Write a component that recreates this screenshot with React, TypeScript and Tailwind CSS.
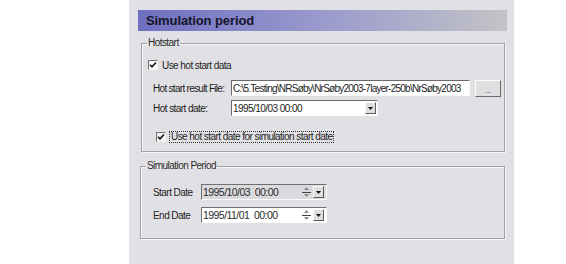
const FONT = "font-['Liberation_Sans',Arial,sans-serif]";

function Check({ focus }: { focus?: boolean }) {
  return (
    <span
      className={`flex h-[10px] w-[10px] shrink-0 items-center justify-center border border-t-[#6f6f6f] border-l-[#6f6f6f] border-b-[#f4f4f4] border-r-[#f4f4f4] ${
        focus ? 'bg-[#f2f2f2]' : 'bg-white'
      }`}
    >
      <svg width="8" height="8" viewBox="0 0 8 8">
        <path d="M1 3.8 L3 5.8 L7 1.5" fill="none" stroke="#111" strokeWidth="1.6" />
      </svg>
    </span>
  );
}

function DropButton({ h = 'h-[12px]' }: { h?: string }) {
  return (
    <span
      className={`flex ${h} w-[11px] items-center justify-center border border-t-[#fafafa] border-l-[#fafafa] border-b-[#5a5a5a] border-r-[#5a5a5a] bg-[#dedede]`}
    >
      <svg width="5" height="3" viewBox="0 0 5 3">
        <path d="M0 0 H5 L2.5 3 Z" fill="#111" />
      </svg>
    </span>
  );
}

function Spin() {
  return (
    <span className="flex h-[12px] w-[9px] flex-col items-center justify-between">
      <svg width="7" height="5" viewBox="0 0 7 5">
        <path d="M3.5 1 L6 4 H1 Z" fill="#8a8a8a" />
      </svg>
      <span className="h-px w-[9px] bg-[#444]" />
      <svg width="7" height="5" viewBox="0 0 7 5">
        <path d="M1 1 H6 L3.5 4 Z" fill="#8a8a8a" />
      </svg>
    </span>
  );
}

function DateField({ value, disabled }: { value: string; disabled?: boolean }) {
  return (
    <div
      className={`flex h-[16px] w-[126px] items-center border border-t-[#707070] border-l-[#707070] border-b-[#fafafa] border-r-[#fafafa] pr-[2px] ${
        disabled ? 'bg-[#dadade]' : 'bg-white'
      }`}
    >
      <span className="flex-1 whitespace-pre pl-[1px] text-[10.5px] leading-none text-[#2a2a2a]">{value}</span>
      <div className="mr-[2px]">
        <Spin />
      </div>
      <DropButton />
    </div>
  );
}

const legendCls = 'ml-[5px] px-[1px] leading-[12px] text-[#2a2a2a]';

export default function App() {
  return (
    <div className={`h-[264px] w-[566px] bg-white ${FONT} text-[10px] tracking-[-0.55px]`}>
      <div className="ml-[129px] h-[264px] w-[385px] bg-[#e1e1e5] pt-[10px]">
        {/* header */}
        <div className="ml-[9px] flex h-[21px] w-[369px] items-center bg-gradient-to-r from-[#6e6ec0] via-[#9a9acd] to-[#c3c3c6] pl-[8px]">
          <span className="text-[13px] font-bold tracking-[-0.1px] text-[#15152a]">Simulation period</span>
        </div>

        {/* Hotstart */}
        <fieldset className="ml-[12px] mt-[6px] h-[115px] w-[364px] border border-[#a2a2a4] shadow-[inset_1px_1px_0_#f6f6f6,1px_1px_0_#f6f6f6]">
          <legend className={legendCls}>Hotstart</legend>
          <div className="mt-[9px] flex h-[14px] items-center pl-[6px]">
            <Check />
            <span className="ml-[4px] text-[#222]">Use hot start data</span>
          </div>
          <div className="mt-[8px] flex h-[16px] items-center pl-[11px]">
            <span className="w-[78px] whitespace-nowrap tracking-[-0.7px] text-[#222]">Hot start result File:</span>
            <div className="flex h-[16px] w-[239px] items-center overflow-hidden border border-t-[#6a6a6a] border-l-[#6a6a6a] border-b-[#fafafa] border-r-[#fafafa] bg-white pl-[1px]">
              <span className="whitespace-nowrap tracking-[-0.75px] text-[#222]">
                C:\5.Testing\NRSøby\NrSøby2003-7layer-250b\NrSøby2003
              </span>
            </div>
            <span className="ml-[5px] flex h-[17px] w-[26px] items-center justify-center border border-t-[#fafafa] border-l-[#fafafa] border-b-[#6a6a6a] border-r-[#6a6a6a] bg-[#dfdfe2] pt-[2px] text-[#777]">
              ...
            </span>
          </div>
          <div className="mt-[4px] flex h-[16px] items-center pl-[11px]">
            <span className="w-[78px] text-[#222]">Hot start date:</span>
            <div className="flex h-[16px] w-[147px] items-center border border-t-[#6a6a6a] border-l-[#6a6a6a] border-b-[#fafafa] border-r-[#fafafa] bg-white pr-[1px]">
              <span className="flex-1 pl-[1px] text-[#222]">1995/10/03 00:00</span>
              <DropButton h="h-[12px]" />
            </div>
          </div>
          <div className="mt-[15px] flex h-[12px] items-center pl-[14px]">
            <Check focus />
            <span className="ml-[3px] border border-dotted border-[#333] px-[1px] leading-[10px] text-[#222]">
              Use hot start date for simulation start date
            </span>
          </div>
        </fieldset>

        {/* Simulation Period */}
        <fieldset className="ml-[11px] mt-[8px] h-[79px] w-[365px] border border-[#a2a2a4] shadow-[inset_1px_1px_0_#f6f6f6,1px_1px_0_#f6f6f6]">
          <legend className={legendCls}>Simulation Period</legend>
          <div className="mt-[12px] flex h-[16px] items-center pl-[12px]">
            <span className="w-[48px] text-[#222]">Start Date</span>
            <DateField value="1995/10/03  00:00" disabled />
          </div>
          <div className="mt-[7px] flex h-[16px] items-center pl-[12px]">
            <span className="w-[48px] text-[#222]">End Date</span>
            <DateField value="1995/11/01  00:00" />
          </div>
        </fieldset>
      </div>
    </div>
  );
}
